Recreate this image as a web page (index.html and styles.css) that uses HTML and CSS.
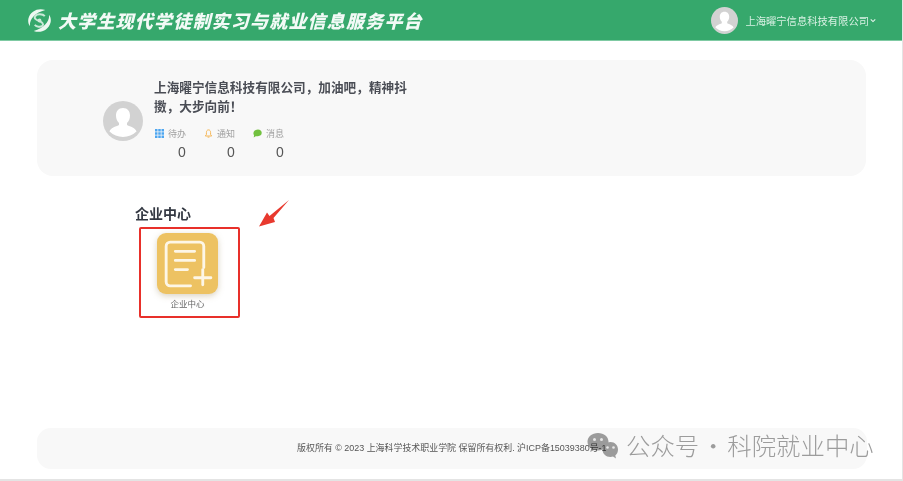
FILE: index.html
```html
<!DOCTYPE html>
<html lang="zh">
<head>
<meta charset="utf-8">
<title>大学生现代学徒制实习与就业信息服务平台</title>
<link rel="stylesheet" href="styles.css">
</head>
<body>
<div class="page">
  <header class="topbar">
    <div class="brand">
      <svg class="logo" viewBox="0 0 26 26" fill="none" stroke="#eef8f2">
        <path d="M19 2.200C12 -.5 3.500 3 1.500 11c-.7 3 0 6 1.500 8C2.500 12 8 5 19 2.200z" fill="#eef8f2" stroke="none"/>
        <path d="M7 23.800c7 2.700 15.500-.8 17.500-8.800.7-3 0-6-1.500-8 .5 7-5 14-16 16.800z" fill="#eef8f2" stroke="none"/>
        <path d="M18.500 8.500c-2-2.500-8-2.700-10 0-2 3 3 4.500 5 5.500s4.500 2.500 2.500 4.500c-2 1.800-6 1-8-1" stroke-width="2" stroke="#c9e9d7"/>
        <circle cx="13" cy="13" r="2" fill="#cfeadb" stroke="none"/>
      </svg>
      <span class="brand-title">大学生现代学徒制实习与就业信息服务平台</span>
    </div>
    <div class="account">
      <svg class="avatar avatar-sm" viewBox="0 0 40 40"><use href="#person"/></svg>
      <span class="account-name">上海曜宁信息科技有限公司</span>
      <svg class="chevron" viewBox="0 0 8 5" fill="none" stroke="#e8f5ee" stroke-width="1.400"><path d="M1 1l3 3 3-3"/></svg>
    </div>
  </header>

  <svg class="defs" width="0" height="0">
    <symbol id="person" viewBox="0 0 40 40">
      <circle cx="20" cy="20" r="20" fill="#d2d2d2"/>
      <path d="M20 7c-4.600 0-7 3.400-7 7.500 0 3 1.100 5.700 3 7.500v2c-3.500 1.800-8.500 2.800-9.500 6.500A20 20 0 0 0 20 36a20 20 0 0 0 13.500-5.500c-1-3.700-6-4.700-9.500-6.500v-2c1.900-1.800 3-4.500 3-7.500C27 10.400 24.600 7 20 7z" fill="#fff"/>
    </symbol>
  </svg>

  <main class="content">
    <section class="welcome">
      <svg class="avatar avatar-lg" viewBox="0 0 40 40"><use href="#person"/></svg>
      <div class="welcome-body">
        <p class="greeting">上海曜宁信息科技有限公司，加油吧，精神抖擞，大步向前！</p>
        <div class="stats">
          <div class="stat">
            <div class="stat-label">
              <svg class="stat-icon" viewBox="0 0 9 9" fill="#4ea6f0"><path d="M0 0h2.500v2.500H0zM3.250 0h2.500v2.500h-2.500zM6.500 0H9v2.500H6.500zM0 3.250h2.500v2.500H0zM3.250 3.250h2.500v2.500h-2.500zM6.500 3.250H9v2.500H6.500zM0 6.500h2.500V9H0zM3.250 6.500h2.500V9h-2.500zM6.500 6.500H9V9H6.500z"/></svg>
              <span>待办</span>
            </div>
            <div class="stat-value">0</div>
          </div>
          <div class="stat">
            <div class="stat-label">
              <svg class="stat-icon" viewBox="0 0 9 10" fill="none" stroke="#f5b656" stroke-width="1.100"><path d="M4.500 1C2.800 1 2.200 2.400 2.200 4v2L1 7.800h7L6.800 6V4C6.800 2.400 6.200 1 4.500 1zM3.500 9h2"/></svg>
              <span>通知</span>
            </div>
            <div class="stat-value">0</div>
          </div>
          <div class="stat">
            <div class="stat-label">
              <svg class="stat-icon" viewBox="0 0 10 10" fill="#72c13f"><path d="M5.500.5C8 .5 9.700 2 9.700 4.300S8 8 5.500 8H3L.8 9.500l.4-2.800C.5 6 .3 5 .6 4 1.300 1.800 3.200.5 5.500.5z"/></svg>
              <span>消息</span>
            </div>
            <div class="stat-value">0</div>
          </div>
        </div>
      </div>
    </section>

    <section class="center">
      <h2 class="center-title">企业中心</h2>
      <div class="tile-row">
        <a class="tile">
          <span class="tile-icon">
            <svg viewBox="0 0 60 60" fill="none" stroke="#fdf6e6" stroke-width="2.800" stroke-linecap="round">
              <path d="M33 52H13a4 4 0 0 1-4-4V13a4 4 0 0 1 4-4h29a4 4 0 0 1 4 4v21"/>
              <path d="M18 18h19M18 27h19M18 36h12"/>
              <path d="M37 44h16M45 36v15"/>
            </svg>
          </span>
          <span class="tile-label">企业中心</span>
        </a>
        <svg class="arrow" viewBox="0 0 31 29"><path d="M30 1 14.500 19 16 23 0 27.500 8 13.500l2.500 3.500z" fill="#e8392e"/></svg>
      </div>
    </section>
  </main>

  <footer class="footer">版权所有 © 2023 上海科学技术职业学院 保留所有权利. 沪ICP备15039380号-1</footer>

  <div class="watermark">
    <svg class="wechat" viewBox="0 0 32 28" fill="#a0a0a0">
      <path d="M11 0C5 0 .5 3.800.5 8.800c0 2.800 1.400 5 3.700 6.600L3.200 19l3.900-2.100c1.300.4 2.500.6 3.900.6 6 0 10.500-3.800 10.500-8.700S17 0 11 0z"/>
      <path d="M23.500 9C18.800 9 15.500 12.400 15.500 16.500s3.300 7.500 8 7.500c.9 0 1.700-.1 2.500-.4l3 1.900-.7-3c1.700-1.400 2.700-3.500 2.700-6 0-4.100-3.200-7.500-7.500-7.500z"/>
      <circle cx="7.500" cy="6.500" r="1.500" fill="#eee"/>
      <circle cx="14.500" cy="6.500" r="1.500" fill="#eee"/>
      <circle cx="20.500" cy="14.500" r="1.300" fill="#eee"/>
      <circle cx="26.500" cy="14.500" r="1.300" fill="#eee"/>
    </svg>
    <span>公众号 · 科院就业中心</span>
  </div>
</div>
</body>
</html>
```

FILE: styles.css
```css
* {
  box-sizing: border-box;
}

html,
body {
  margin: 0;
  padding: 0;
}

body {
  background: #fff;
  font-family: "Liberation Sans", "Noto Sans CJK SC", sans-serif;
  color: #333;
}

.page {
  position: relative;
  width: 903px;
  height: 481px;
  overflow: hidden;
  display: flex;
  flex-direction: column;
  border-right: 1px solid #e4e4e4;
  border-bottom: 2px solid #e4e4e4;
}

.defs {
  position: absolute;
}

.topbar {
  flex: none;
  height: 41px;
  background: #36a86c;
  border-bottom: 1px solid #7fcaa3;
  display: flex;
  align-items: center;
  justify-content: space-between;
  padding: 0 26px 0 27px;
  color: #fff;
}

.brand {
  display: flex;
  align-items: center;
  gap: 6px;
}

.logo {
  width: 25px;
  height: 25px;
}

.brand-title {
  font-family: "Noto Sans CJK SC", sans-serif;
  font-size: 18px;
  font-weight: 900;
  font-style: italic;
  letter-spacing: 1.200px;
  line-height: 20px;
  color: #f2faf6;
}

.account {
  display: flex;
  align-items: center;
}

.avatar {
  display: block;
  flex: none;
}

.avatar-sm {
  width: 27px;
  height: 27px;
  margin-right: 7px;
}

.account-name {
  font-size: 10.300px;
  color: #d8f0e3;
}

.chevron {
  width: 6px;
  height: 5px;
  margin-left: 1px;
}

.content {
  flex: 1;
  display: flex;
  flex-direction: column;
  padding: 19px 36px 0 37px;
}

.welcome {
  height: 116px;
  background: #f8f8f8;
  border-radius: 16px;
  display: flex;
  align-items: flex-start;
  padding: 19px 0 0 66px;
}

.avatar-lg {
  width: 40px;
  height: 40px;
  margin: 22px 11px 0 0;
}

.welcome-body {
  width: 256px;
}

.greeting {
  margin: 0;
  font-size: 12.650px;
  line-height: 19px;
  font-weight: 700;
  color: #4a4d55;
}

.stats {
  display: flex;
  margin-top: 10px;
  margin-left: 1px;
}

.stat {
  width: 49px;
}

.stat-label {
  display: flex;
  align-items: center;
  gap: 4px;
  height: 12px;
  font-size: 9px;
  color: #a0a0a0;
}

.stat-icon {
  width: 9px;
  height: 9px;
  flex: none;
}

.stat-value {
  margin-top: 5px;
  padding-left: 23px;
  font-size: 14px;
  line-height: 17px;
  color: #555;
}

.center {
  margin: 30px 0 0 98px;
}

.center-title {
  margin: 0;
  font-size: 14px;
  line-height: 16px;
  font-weight: 700;
  color: #333842;
}

.tile-row {
  display: flex;
  align-items: flex-start;
}

.tile {
  width: 101px;
  height: 91px;
  margin: 5px 0 0 4px;
  border: 2px solid #e8302a;
  border-radius: 2px;
  display: flex;
  flex-direction: column;
  align-items: center;
  padding: 4px 4px 0 0;
}

.tile-icon {
  width: 61px;
  height: 61px;
  border-radius: 9px;
  background: #edc262;
  box-shadow: 0 2px 6px rgba(150, 130, 80, 0.35);
  display: block;
}

.tile-icon svg {
  display: block;
  width: 61px;
  height: 61px;
}

.tile-label {
  margin-top: 5px;
  font-size: 8.500px;
  line-height: 10px;
  color: #666;
}

.arrow {
  width: 31px;
  height: 29px;
  margin: -23px 0 0 19px;
}

.footer {
  flex: none;
  width: 830px;
  height: 41px;
  margin: 0 0 10px 37px;
  border-radius: 14px;
  background: #f8f8f8;
  font-size: 8.950px;
  line-height: 40px;
  color: #555;
  padding-left: 260px;
}

.watermark {
  position: absolute;
  left: 587px;
  top: 431px;
  display: flex;
  align-items: flex-start;
  gap: 7px;
  color: #9c9c9c;
  font-family: "Noto Sans CJK SC", sans-serif;
  font-size: 24.400px;
  font-weight: 300;
  line-height: 28px;
  word-spacing: -3.500px;
  white-space: nowrap;
}

.wechat {
  width: 32px;
  height: 28px;
  margin-top: 2px;
  mix-blend-mode: multiply;
}
```
